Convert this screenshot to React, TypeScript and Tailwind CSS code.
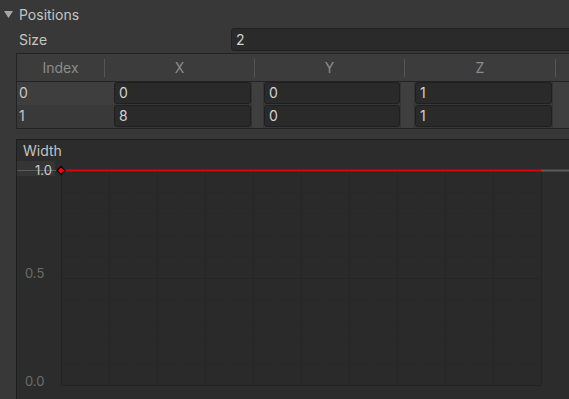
import React from "react";

const rows = [
  ["0", "0", "0", "1"],
  ["1", "8", "0", "1"],
];

function Field({ value, w }: { value: string; w: string }) {
  return (
    <div
      className={`${w} h-[22px] shrink-0 rounded-[3px] border border-[#1f1f1f] bg-[#2a2a2a] pl-[4px] text-[14px] leading-[20px] text-[#d2d2d2]`}
    >
      {value}
    </div>
  );
}

function Strip({ w }: { w: string }) {
  return <div className={`${w} h-[23px] shrink-0 border-x border-[#333] bg-[#3f3f3f]`} />;
}

function CurvePlot() {
  const left = 44;
  const right = 524;
  const top = 9;
  const bottom = 224;
  const minorX = Array.from({ length: 21 }, (_, i) => left + i * 24);
  const minorY = Array.from({ length: 11 }, (_, i) => top + (i * (bottom - top)) / 10);
  return (
    <svg className="absolute left-0 top-0" width="560" height="238">
      <rect x={left} y={top} width={right - left} height={bottom - top} fill="#2a2a2a" />
      {minorX.map((x, i) => (
        <line
          key={"vx" + i}
          x1={x + 0.5}
          x2={x + 0.5}
          y1={top}
          y2={bottom}
          stroke={i % 2 === 0 ? "#262626" : "#282828"}
        />
      ))}
      {minorY.map((y, i) => (
        <line
          key={"hy" + i}
          x1={left}
          x2={right}
          y1={Math.round(y) + 0.5}
          y2={Math.round(y) + 0.5}
          stroke={i === 5 ? "#252525" : "#282828"}
        />
      ))}
      <line x1={left + 0.5} x2={left + 0.5} y1={top} y2={bottom} stroke="#222" />
      <line x1={left} x2={right} y1={bottom + 0.5} y2={bottom + 0.5} stroke="#222" />
      <line x1={right + 0.5} x2={right + 0.5} y1={top} y2={bottom} stroke="#242424" />
      {/* limits */}
      <line x1={0} x2={left} y1={top + 0.5} y2={top + 0.5} stroke="#5c5c5c" />
      <line x1={right} x2={560} y1={top + 0.5} y2={top + 0.5} stroke="#5a5a5a" strokeWidth="2" />
      {/* curve */}
      <line x1={left} x2={right} y1={top + 0.5} y2={top + 0.5} stroke="#e30000" strokeWidth="2" />
      <polygon
        points={`${left},${top - 3.5} ${left + 4},${top + 0.5} ${left},${top + 4.5} ${left - 4},${top + 0.5}`}
        fill="#ff0000"
        stroke="#000"
        strokeWidth="1.2"
      />
    </svg>
  );
}

export default function App() {
  return (
    <div
      className="relative h-[399px] w-[569px] overflow-hidden bg-[#383838] text-[14px] text-[#c4c4c4]"
      style={{ fontFamily: "Inter, 'Noto Sans', sans-serif" }}
    >
      {/* Foldout header */}
      <div className="flex h-[27px] items-center pl-[4px] pt-[1px]">
        <svg width="9" height="9" viewBox="0 0 9 9" className="mr-[6px]">
          <polygon points="0,1 9,1 4.5,8" fill="#a6a6a6" />
        </svg>
        <span>Positions</span>
      </div>

      {/* Size */}
      <div className="flex h-[24px] items-center">
        <span className="w-[231px] shrink-0 pl-[19px]">Size</span>
        <div className="h-[23px] w-[360px] shrink-0 rounded-[3px] border border-[#212121] bg-[#2a2a2a] pl-[4px] leading-[21px] text-[#d2d2d2]">
          2
        </div>
      </div>

      {/* Table */}
      <div className="ml-[16px] mt-[2px] w-[580px] border border-[#232323] bg-[#383838]">
        <div className="flex h-[28px] items-center border-b border-[#232323] bg-[#3c3c3c] text-[#8c8c8c]">
          <div className="flex h-full w-[87px] items-center justify-center">Index</div>
          <div className="h-[18px] w-px bg-[#555]" />
          <div className="flex h-full w-[149px] items-center justify-center">X</div>
          <div className="h-[18px] w-px bg-[#555]" />
          <div className="flex h-full w-[149px] items-center justify-center">Y</div>
          <div className="h-[18px] w-px bg-[#555]" />
          <div className="flex h-full w-[150px] items-center justify-center">Z</div>
          <div className="h-[18px] w-px bg-[#555]" />
        </div>
        {rows.map((r, i) => (
          <div key={i} className="flex h-[23px] items-start">
            <div
              className={`h-[23px] w-[97px] shrink-0 pl-[2px] leading-[22px] text-[#c8c8c8] ${
                i === 0 ? "bg-[#3e3e3e]" : "bg-[#393939]"
              }`}
            >
              {r[0]}
            </div>
            <Field value={r[1]} w="w-[137px]" />
            <Strip w="w-[13px]" />
            <Field value={r[2]} w="w-[136px]" />
            <Strip w="w-[15px]" />
            <Field value={r[3]} w="w-[137px]" />
            <Strip w="w-[40px]" />
          </div>
        ))}
      </div>

      {/* Curve panel */}
      <div className="ml-[16px] mt-[10px] h-[270px] w-[580px] border-l border-t border-[#1e1e1e] bg-[#2c2c2c]">
        <div className="h-[21px] pl-[6px] leading-[22px] text-[#c4c4c4]">Width</div>
        <div className="relative h-[240px]">
          <div className="absolute left-0 top-0 h-[15px] w-[38px] bg-[#353535]" />
          <CurvePlot />
          <span className="absolute left-[18px] top-[1px] text-[13px] leading-[16px] text-[#c8c8c8]">1.0</span>
          <span className="absolute left-[8px] top-[104px] text-[13px] leading-[16px] text-[#6c6c6c]">0.5</span>
          <span className="absolute left-[8px] top-[212px] text-[13px] leading-[16px] text-[#6c6c6c]">0.0</span>
        </div>
      </div>
    </div>
  );
}
